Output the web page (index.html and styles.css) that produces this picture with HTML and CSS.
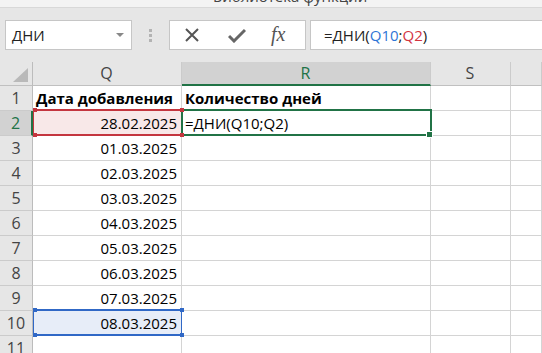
FILE: index.html
```html
<!DOCTYPE html>
<html lang="ru">
  <head>
    <meta charset="UTF-8" />
    <meta name="viewport" content="width=device-width, initial-scale=1.0" />
    <title>ДНИ</title>
    <link rel="stylesheet" href="styles.css">
  </head>
  <body>
    <!-- ribbon group caption, cut off at the top -->
    <div class="ribbon-tail">
      <span>Библиотека функций</span>
    </div>

    <!-- formula bar -->
    <div class="formula-bar">
      <div class="name-box">
        <span>ДНИ</span>
        <span class="caret"></span>
      </div>
      <div class="grip"><i></i><i></i><i></i></div>
      <div class="fx-buttons">
        <svg class="btn-icon" width="16" height="16" viewBox="0 0 16 16">
          <path d="M2 2 L14 14 M14 2 L2 14" stroke="#555" stroke-width="2" fill="none" />
        </svg>
        <svg class="btn-icon" width="18" height="16" viewBox="0 0 18 16">
          <path d="M1 9 L6 14 L17 3" stroke="#666" stroke-width="3" fill="none" />
        </svg>
        <span class="fx">fx</span>
      </div>
      <div class="formula-input">
        =ДНИ(<span class="ref-blue">Q10</span>;<span class="ref-red">Q2</span>)
      </div>
    </div>

    <!-- sheet -->
    <div class="sheet">
      <div class="cell corner"><span class="corner-tri"></span></div>
      <div class="cell col-head">Q</div>
      <div class="cell col-head active">R</div>
      <div class="cell col-head">S</div>
      <div class="cell col-head"></div>

      <div class="cell row-head">1</div>
      <div class="cell bold">Дата добавления</div>
      <div class="cell bold">Количество дней</div>
      <div class="cell"></div>
      <div class="cell"></div>

      <div class="cell row-head active">2</div>
      <div class="cell date ref red">28.02.2025<i class="h tl"></i><i class="h tr"></i><i class="h bl"></i><i class="h br"></i></div>
      <div class="cell current">=ДНИ(Q10;Q2)<i class="fill-handle"></i></div>
      <div class="cell"></div>
      <div class="cell"></div>

      <div class="cell row-head">3</div>
      <div class="cell date">01.03.2025</div>
      <div class="cell"></div>
      <div class="cell"></div>
      <div class="cell"></div>

      <div class="cell row-head">4</div>
      <div class="cell date">02.03.2025</div>
      <div class="cell"></div>
      <div class="cell"></div>
      <div class="cell"></div>

      <div class="cell row-head">5</div>
      <div class="cell date">03.03.2025</div>
      <div class="cell"></div>
      <div class="cell"></div>
      <div class="cell"></div>

      <div class="cell row-head">6</div>
      <div class="cell date">04.03.2025</div>
      <div class="cell"></div>
      <div class="cell"></div>
      <div class="cell"></div>

      <div class="cell row-head">7</div>
      <div class="cell date">05.03.2025</div>
      <div class="cell"></div>
      <div class="cell"></div>
      <div class="cell"></div>

      <div class="cell row-head">8</div>
      <div class="cell date">06.03.2025</div>
      <div class="cell"></div>
      <div class="cell"></div>
      <div class="cell"></div>

      <div class="cell row-head">9</div>
      <div class="cell date">07.03.2025</div>
      <div class="cell"></div>
      <div class="cell"></div>
      <div class="cell"></div>

      <div class="cell row-head">10</div>
      <div class="cell date ref blue">08.03.2025<i class="h tl"></i><i class="h tr"></i><i class="h bl"></i><i class="h br"></i></div>
      <div class="cell"></div>
      <div class="cell"></div>
      <div class="cell"></div>

      <div class="cell row-head">11</div>
      <div class="cell"></div>
      <div class="cell"></div>
      <div class="cell"></div>
      <div class="cell"></div>
    </div>
  </body>
</html>
```

FILE: styles.css
```css
body {
  margin: 0;
  width: 542px;
  height: 353px;
  overflow: hidden;
  background-color: #e6e6e6;
  font-family: "Open Sans", "Noto Sans", sans-serif;
  color: #000;
}
.ribbon-tail {
  height: 7px;
  background-color: #f3f3f3;
  border-bottom: 1px solid #d8d8d8;
  overflow: hidden;
  padding-left: 213px;
}
.ribbon-tail span {
  display: block;
  margin-top: -13px;
  font-size: 15px;
  line-height: 18px;
  color: #444;
}
.formula-bar {
  display: flex;
  align-items: center;
  height: 30px;
  padding: 12px 0 0 5px;
}
.name-box {
  box-sizing: border-box;
  width: 127px;
  height: 30px;
  background-color: #fff;
  border: 1px solid #c6c6c6;
  display: flex;
  align-items: center;
  justify-content: space-between;
  padding: 0 7px 0 6px;
  font-size: 15px;
  color: #222;
}
.caret {
  width: 0;
  height: 0;
  border-left: 4px solid transparent;
  border-right: 4px solid transparent;
  border-top: 4px solid #888;
}
.grip {
  width: 37px;
  display: flex;
  flex-direction: column;
  align-items: center;
  gap: 2px;
}
.grip i {
  width: 3px;
  height: 3px;
  background-color: #b3b3b3;
}
.fx-buttons {
  box-sizing: border-box;
  width: 137px;
  height: 30px;
  background-color: #fff;
  border: 1px solid #c6c6c6;
  display: flex;
  align-items: center;
  padding-left: 14px;
  gap: 28px;
}
.fx {
  font-family: "Liberation Serif", serif;
  font-style: italic;
  font-size: 20px;
  line-height: 20px;
  color: #555;
  margin-left: -3px;
  margin-top: -3px;
}
.formula-input {
  box-sizing: border-box;
  flex: 1;
  height: 30px;
  margin-left: 4px;
  background-color: #fff;
  border: 1px solid #c6c6c6;
  border-right: none;
  padding-left: 13px;
  font-size: 15px;
  line-height: 28px;
  color: #222;
}
.ref-blue {
  color: #2e75d6;
}
.ref-red {
  color: #d3343f;
}
.sheet {
  margin-top: 12px;
  display: grid;
  grid-template-columns: 33px 149px 249px 80px 31px;
  grid-template-rows: 24px;
  grid-auto-rows: 25px;
  background-color: #fff;
}
.cell {
  box-sizing: border-box;
  position: relative;
  border-right: 1px solid #d4d4d4;
  border-bottom: 1px solid #d4d4d4;
  font-size: 15px;
  line-height: 24px;
  padding: 0 4px 0 3px;
  white-space: nowrap;
}
.corner,
.col-head,
.row-head {
  background-color: #e6e6e6;
  color: #444;
  text-align: center;
  border-color: #cbcbcb;
}
.col-head {
  border-bottom-color: #c0c0c0;
  line-height: 23px;
  font-size: 16px;
}
.row-head {
  border-right-color: #bcbcbc;
  padding: 0;
  font-size: 16px;
}
.corner {
  border-right-color: #bcbcbc;
  border-bottom-color: #c0c0c0;
}
.corner-tri {
  position: absolute;
  right: 4px;
  bottom: 3px;
  width: 15px;
  height: 14px;
  background-color: #b9b9b9;
  clip-path: polygon(100% 0, 100% 100%, 0 100%);
}
.col-head.active {
  background-color: #d2d2d2;
  color: #217346;
  border-bottom: 2px solid #217346;
}
.row-head.active {
  background-color: #d2d2d2;
  color: #217346;
  border-right: 2px solid #217346;
}
.bold {
  font-weight: bold;
}
.date {
  text-align: right;
}
.ref.red {
  background-color: #f8e8e8;
}
.ref.blue {
  background-color: #e7edf8;
}
.ref::after {
  content: "";
  position: absolute;
  top: -2px;
  left: 0;
  right: -1px;
  bottom: -1px;
  border: 2px solid;
  border-left-width: 1px;
  border-right-width: 1px;
}
.ref.red::after {
  border-color: #c4363f;
}
.ref.blue::after {
  border-color: #3068c6;
}
.h {
  position: absolute;
  width: 4px;
  height: 4px;
  z-index: 2;
}
.red .h {
  background-color: #c4363f;
}
.blue .h {
  background-color: #3068c6;
}
.h.tl { left: 0; top: -3px; }
.h.tr { right: -3px; top: -3px; }
.h.bl { left: 0; bottom: -2px; }
.h.br { right: -3px; bottom: -2px; }
.current::after {
  content: "";
  position: absolute;
  top: -2px;
  left: -1px;
  right: -2px;
  bottom: -1px;
  border: 2px solid #217346;
}
.fill-handle {
  position: absolute;
  right: -3px;
  bottom: -3px;
  width: 5px;
  height: 5px;
  background-color: #217346;
  border: 1px solid #fff;
  z-index: 2;
}
```
